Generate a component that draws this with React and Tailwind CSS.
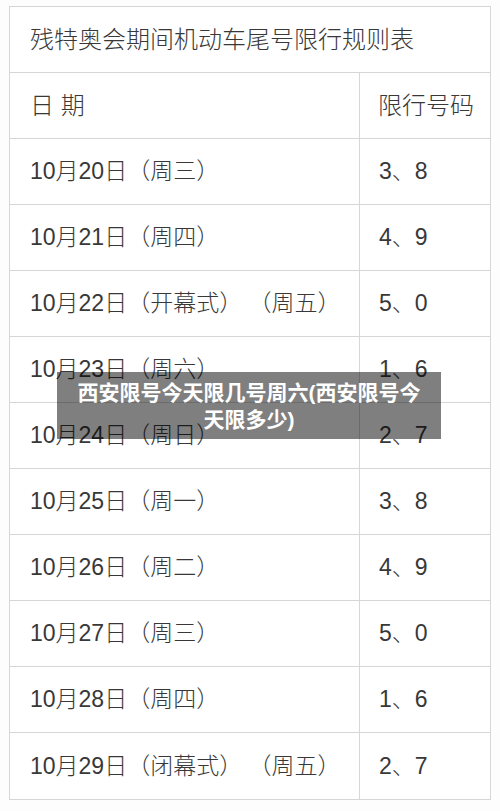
import React from 'react'

const rows = [
  ['10月20日（周三）', '3、8'],
  ['10月21日（周四）', '4、9'],
  ['10月22日（开幕式）（周五）', '5、0'],
  ['10月23日（周六）', '1、6'],
  ['10月24日（周日）', '2、7'],
  ['10月25日（周一）', '3、8'],
  ['10月26日（周二）', '4、9'],
  ['10月27日（周三）', '5、0'],
  ['10月28日（周四）', '1、6'],
  ['10月29日（闭幕式）（周五）', '2、7'],
]

const font = { fontFamily: '"Liberation Sans", "Noto Sans CJK SC", sans-serif' }

export default function App() {
  return (
    <div className="relative w-[500px] h-[811px] bg-[#fdfdfd] pt-[6px] pl-[9px]" style={font}>
      <div className="w-[482px] border border-[#d6d6d6] bg-white text-[#383838] font-light">
        {/* title */}
        <div className="h-[66px] flex items-center pl-[20px] text-[24px] border-b border-[#d6d6d6]">
          残特奥会期间机动车尾号限行规则表
        </div>

        {/* header */}
        <div className="flex h-[66px] border-b border-[#d6d6d6] text-[24px]">
          <div className="w-[350px] flex items-center pl-[20px] border-r border-[#d6d6d6]">日 期</div>
          <div className="flex-1 flex items-center pl-[18px]">限行号码</div>
        </div>

        {/* rows */}
        {rows.map(([d, n], i) => (
          <div
            key={i}
            className={'flex h-[66px] text-[23px] ' + (i < rows.length - 1 ? 'border-b border-[#d6d6d6]' : '')}
          >
            <div className="w-[350px] flex items-center pl-[20px] border-r border-[#d6d6d6] whitespace-pre">{d.replace('）（', '） （')}</div>
            <div className="flex-1 flex items-center pl-[19px]">{n}</div>
          </div>
        ))}
      </div>

      {/* overlay caption */}
      <div className="absolute left-[57px] top-[372px] w-[384px] h-[67px] bg-black/50 flex items-center justify-center text-center text-white font-bold text-[21px] leading-[27px] px-[17px]">
        西安限号今天限几号周六(西安限号今天限多少)
      </div>
    </div>
  )
}
